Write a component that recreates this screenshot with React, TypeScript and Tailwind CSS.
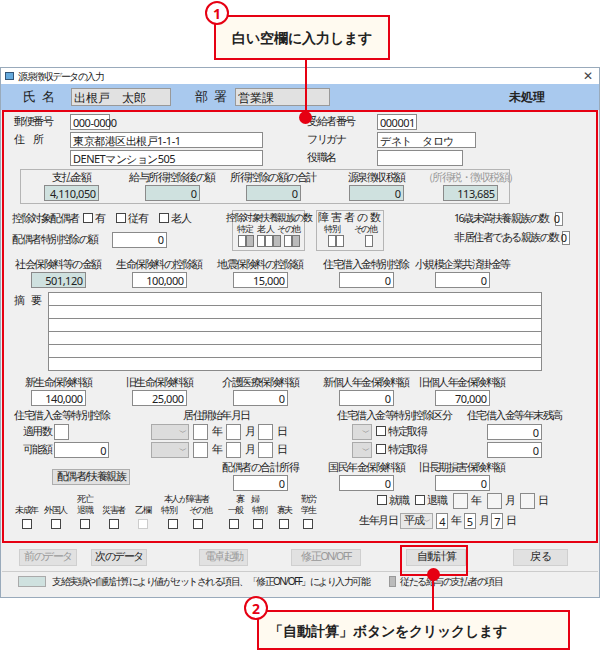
import React from "react";

const F = "font-['Noto_Sans_CJK_JP','Noto_Sans',sans-serif]";

function Box({ w, v = "", c = "bg-white", r = true, h = "h-[16px]" }: { w: number; v?: string; c?: string; r?: boolean; h?: string }) {
  return (
    <div className={`${h} border border-[#8a8a8a] ${c} flex items-center px-[2px] text-[11px] tracking-[-0.5px] leading-none text-[#222] ${r ? "justify-end" : "justify-start"}`} style={{ width: w }}>
      {v}
    </div>
  );
}
function Cb() {
  return <span className="inline-block w-[10px] h-[10px] border border-[#444] bg-white mr-[2px] align-[-1px]" />;
}
function Sel({ w = 40, v = "" }: { w?: number; v?: string }) {
  return (
    <div className={`h-[16px] border border-[#aaa] ${v ? "bg-[#e8e8e8]" : "bg-[#dcdcdc]"} flex items-center justify-between px-[3px]`} style={{ width: w }}>
      <span>{v}</span>
      <span className="text-[8px] text-[#777]">﹀</span>
    </div>
  );
}
function Col({ label, v, c = "bg-white", w = 55 }: { label: string; v: string; c?: string; w?: number }) {
  return (
    <div className="flex flex-col items-center gap-[1px]">
      <div className="leading-[13px]">{label}</div>
      <Box w={w} v={v} c={c} />
    </div>
  );
}
const grid = "grid grid-cols-[100px_102px_100px_112px_80px] ml-[4px]";
const teal = "bg-[#cfe1df]";

export default function App() {
  return (
    <div className={`${F} relative w-[600px] h-[656px] bg-white text-[#222] text-[10.5px] tracking-[-1.5px] whitespace-nowrap overflow-hidden`}>
      <div className="h-[67px]" />
      <div className="border border-[#9ab] bg-[#f0f0f0] h-[531px] flex flex-col">
        <div className="h-[16px] bg-white flex items-center px-[4px] gap-[4px] text-[10px]">
          <span className="w-[9px] h-[8px] border border-[#357] bg-[#6ad]" />
          <span>源泉徴収データの入力</span>
          <span className="ml-auto text-[12px] text-[#444] pr-[4px]">✕</span>
        </div>
        <div className="h-[26px] bg-[#a9c9ee] flex items-center text-[13px] tracking-normal">
          <span className="ml-[22px] w-[48px] tracking-[6px]">氏名</span>
          <div className="w-[100px] h-[18px] bg-[#e1e1e1] border border-[#999] px-[2px] text-[12px]">出根戸　太郎</div>
          <span className="ml-[24px] w-[40px] tracking-[6px]">部署</span>
          <div className="w-[95px] h-[18px] bg-[#e1e1e1] border border-[#999] px-[2px] text-[12px]">営業課</div>
          <span className="ml-auto mr-[54px] font-bold text-[12px]">未処理</span>
        </div>
        <div className="mx-[1px] border-2 border-[#e60012] h-[433px] pt-[2px] flex flex-col">
          <div className="flex">
            <div className="w-[290px] pl-[10px] flex flex-col gap-[2px]">
              <div className="flex items-center"><span className="w-[56px]">郵便番号</span><Box w={40} v="000-0000" r={false} /></div>
              <div className="flex items-center"><span className="w-[56px] tracking-[8px]">住所</span><Box w={193} v="東京都港区出根戸1-1-1" r={false} /></div>
              <div className="flex items-center"><span className="w-[56px]" /><Box w={193} v="DENETマンション505" r={false} /></div>
            </div>
            <div className="pl-[13px] flex flex-col gap-[2px]">
              <div className="flex items-center"><span className="w-[70px]">受給者番号</span><Box w={40} v="000001" r={false} /></div>
              <div className="flex items-center"><span className="w-[70px]">フリガナ</span><Box w={99} v="デネト　タロウ" r={false} /></div>
              <div className="flex items-center"><span className="w-[70px]">役職名</span><Box w={86} /></div>
            </div>
          </div>
          <div className="ml-[16px] mt-[3px] w-[490px] h-[35px] border border-[#b5b5b5] grid grid-cols-[100px_102px_100px_106px_82px] pt-[1px]">
            <Col label="支払金額" v="4,110,050" c={teal} />
            <Col label="給与所得控除後の額" v="0" c={teal} />
            <Col label="所得控除の額の合計" v="0" c={teal} />
            <Col label="源泉徴収税額" v="0" c={teal} />
            <div className="flex flex-col items-center gap-[1px]"><div className="leading-[13px] text-[#999]">（所得税・徴収税額）</div><Box w={55} v="113,685" c={teal} /></div>
          </div>
          <div className="flex mt-[6px] ml-[8px]">
            <div className="w-[220px] flex flex-col gap-[5px] pt-[1px]">
              <div className="flex items-center">控除対象配偶者 <span className="ml-[4px]"><Cb />有</span><span className="ml-[12px]"><Cb />従有</span><span className="ml-[12px]"><Cb />老人</span></div>
              <div className="flex items-center">配偶者特別控除の額<span className="ml-[14px]"><Box w={55} v="0" /></span></div>
            </div>
            <div className="w-[73px] h-[41px] border border-[#b5b5b5] flex flex-col items-center leading-[12px]">
              <div className="text-[10px]">控除対象扶養親族の数</div>
              <div className="flex w-full text-[9px] justify-around px-[2px]"><span>特 定</span><span>老 人</span><span>その他</span></div>
              <div className="flex w-full justify-around px-[3px]">
                <div className="flex"><i className="w-[8px] h-[12px] border border-[#777] bg-white" /><i className="w-[8px] h-[12px] border border-[#777] bg-[#bbb]" /></div>
                <div className="flex"><i className="w-[8px] h-[12px] border border-[#777] bg-white" /><i className="w-[8px] h-[12px] border border-[#777] bg-white" /><i className="w-[8px] h-[12px] border border-[#777] bg-[#bbb]" /></div>
                <div className="flex"><i className="w-[8px] h-[12px] border border-[#777] bg-white" /><i className="w-[8px] h-[12px] border border-[#777] bg-[#bbb]" /></div>
              </div>
            </div>
            <div className="ml-[11px] w-[68px] h-[41px] border border-[#b5b5b5] flex flex-col items-center leading-[12px]">
              <div className="tracking-[2px]">障害者の数</div>
              <div className="flex w-full text-[9px] justify-around"><span>特 別</span><span>その他</span></div>
              <div className="flex w-full justify-around">
                <div className="flex"><i className="w-[8px] h-[12px] border border-[#777] bg-white" /><i className="w-[8px] h-[12px] border border-[#777] bg-white" /></div>
                <i className="w-[8px] h-[12px] border border-[#777] bg-white" />
              </div>
            </div>
            <div className="ml-[70px] flex flex-col gap-[3px] pt-[1px]">
              <div className="flex items-center gap-[6px]">16歳未満扶養親族の数<Box w={8} v="0" h="h-[14px]" /></div>
              <div className="flex items-center gap-[3px]">非居住者である親族の数<Box w={8} v="0" h="h-[14px]" /></div>
            </div>
          </div>
          <div className={`${grid} mt-[7px]`}>
            <Col label="社会保険料等の金額" v="501,120" c={teal} />
            <Col label="生命保険料の控除額" v="100,000" />
            <Col label="地震保険料の控除額" v="15,000" />
            <Col label="住宅借入金特別控除" v="0" />
            <Col label="小規模企業共済掛金等" v="0" />
          </div>
          <div className="flex ml-[10px] mt-[4px]">
            <span className="w-[34px] tracking-[6px] pt-[1px]">摘要</span>
            <div className="flex flex-col">
              {[0, 1, 2, 3, 4, 5].map((i) => (
                <div key={i} className="w-[494px] h-[14px] border border-[#8a8a8a] bg-white -mt-[1px] first:mt-0" />
              ))}
            </div>
          </div>
          <div className={`${grid} mt-[5px]`}>
            <Col label="新生命保険料額" v="140,000" />
            <Col label="旧生命保険料額" v="25,000" />
            <Col label="介護医療保険料額" v="0" />
            <Col label="新個人年金保険料額" v="0" />
            <Col label="旧個人年金保険料額" v="70,000" />
          </div>
          <div className="flex mt-[3px]">
            <div className="w-[130px] pl-[10px] flex flex-col gap-[2px]">
              <div className="leading-[13px]">住宅借入金等特別控除</div>
              <div className="flex items-center"><span className="w-[40px] text-right pr-[3px]">適用数</span><Box w={15} /></div>
              <div className="flex items-center"><span className="w-[40px] text-right pr-[3px]">可能額</span><Box w={55} v="0" /></div>
            </div>
            <div className="w-[200px] pl-[17px] flex flex-col gap-[2px]">
              <div className="pl-[32px] leading-[13px]">居住開始年月日</div>
              {[0, 1].map((i) => (
                <div key={i} className="flex items-center gap-[4px]"><Sel w={38} /><Box w={15} />年<Box w={15} />月<Box w={15} />日</div>
              ))}
            </div>
            <div className="w-[150px] flex flex-col gap-[2px]">
              <div className="pl-[3px] leading-[13px]">住宅借入金等特別控除区分</div>
              {[0, 1].map((i) => (
                <div key={i} className="flex items-center gap-[4px] pl-[18px]"><Sel w={20} /><span><Cb />特定取得</span></div>
              ))}
            </div>
            <div className="flex flex-col items-center gap-[2px] w-[80px] ml-[-10px]">
              <div className="leading-[13px]">住宅借入金等年末残高</div>
              <Box w={55} v="0" />
              <Box w={55} v="0" />
            </div>
          </div>
          <div className={`${grid} mt-[3px]`}>
            <div className="col-span-2 flex items-center pl-[44px]">
              <div className="w-[78px] h-[16px] bg-[#e1e1e1] border border-[#adadad] flex items-center justify-center mt-[2px]">配偶者/扶養親族</div>
            </div>
            <Col label="配偶者の合計所得" v="0" />
            <Col label="国民年金保険料額" v="0" />
            <Col label="旧長期損害保険料額" v="0" />
          </div>
          <div className="flex mt-[2px] items-end">
            <div className="flex items-end text-[9px] tracking-[-1.5px] leading-[11px] pl-[8px]">
              {[["", "未成年"], ["", "外国人"], ["死亡", "退職"], ["", "災害者"], ["", "乙欄"]].map(([a, b], i) => (
                <div key={i} className="flex flex-col items-center w-[29px]">
                  <span>{a}</span><span>{b}</span>
                  <span className={`mt-[4px] w-[10px] h-[10px] border ${i === 4 ? "border-[#ccc]" : "border-[#444]"} bg-white`} />
                </div>
              ))}
              <div className="flex flex-col items-center w-[50px] ml-[4px]">
                <span>本人が障害者</span>
                <div className="flex w-full justify-between"><span>特別</span><span>その他</span></div>
                <div className="flex w-full justify-around mt-[4px]"><Cb /><Cb /></div>
              </div>
              <div className="flex flex-col items-center w-[48px] ml-[12px]">
                <span>寡　婦</span>
                <div className="flex w-full justify-around"><span>一般</span><span>特別</span></div>
                <div className="flex w-full justify-around mt-[4px]"><Cb /><Cb /></div>
              </div>
              <div className="flex flex-col items-center w-[26px]">
                <span>寡夫</span>
                <span className="mt-[4px] w-[10px] h-[10px] border border-[#444] bg-white" />
              </div>
              <div className="flex flex-col items-center w-[22px]">
                <span>勤労</span><span>学生</span>
                <span className="mt-[4px] w-[10px] h-[10px] border border-[#444] bg-white" />
              </div>
            </div>
            <div className="ml-[40px] flex flex-col gap-[4px]">
              <div className="flex items-center gap-[3px] pl-[18px]"><span><Cb />就職</span><span className="ml-[4px]"><Cb />退職</span><span className="ml-[4px]"><Box w={15} c="bg-[#f5f5f5]" /></span>年<span className="ml-[3px]"><Box w={15} c="bg-[#f5f5f5]" /></span>月<span className="ml-[3px]"><Box w={15} c="bg-[#f5f5f5]" /></span>日</div>
              <div className="flex items-center gap-[3px]">生年月日<Sel w={33} v="平成" /><Box w={12} v="4" />年<Box w={12} v="5" />月<Box w={12} v="7" />日</div>
            </div>
          </div>
        </div>
        <div className="flex items-center h-[28px]">
          {([["前のデータ", 18, 58, "text-[#999]"], ["次のデータ", 14, 56, "border-[#0078d7] text-[#222]"], ["電卓起動", 52, 49, "text-[#999]"], ["修正ON/OFF", 43, 70, "text-[#999]"], ["自動計算", 45, 60, "text-[#222] border-[#adadad]"], ["戻 る", 47, 55, "text-[#222] border-[#adadad]"]] as [string, number, number, string][]).map(([t, m, w, c], i) => (
            <div key={i} style={{ marginLeft: m, width: w }} className={`h-[17px] bg-[#e1e1e1] border border-[#cfcfcf] flex items-center justify-center ${c}`}>{t}</div>
          ))}
        </div>
        <div className="mx-[1px] h-[19px] border-t border-[#ccc] flex items-center text-[10px] gap-[4px]">
          <span className="ml-[16px] w-[28px] h-[11px] bg-[#cfe1df] border border-[#aaa]" />
          <span className="ml-[2px]">支給実績や自動計算により値がセットされる項目、「修正ON/OFF」により入力可能</span>
          <span className="ml-[16px] w-[7px] h-[11px] bg-[#bbb] border border-[#999]" />
          <span>従たる給与の支払者の項目</span>
        </div>
      </div>

      <div className="absolute left-[305px] top-[58px] w-[2px] h-[58px] bg-[#e60012]" />
      <div className="absolute left-[299px] top-[111px] w-[13px] h-[13px] rounded-full bg-[#e60012]" />
      <div className="absolute left-[214px] top-[15px] w-[176px] h-[45px] border-2 border-[#e60012] bg-[#fffaf0] flex items-center justify-center text-[14px] tracking-normal font-bold text-[#222]">白い空欄に入力します</div>
      <div className="absolute left-[205px] top-[1px] w-[24px] h-[24px] rounded-full bg-white border-2 border-[#e60012] text-[#e60012] flex items-center justify-center font-bold text-[14px] tracking-normal">1</div>
      <div className="absolute left-[400px] top-[545px] w-[68px] h-[31px] border-2 border-[#e60012]" />
      <div className="absolute left-[432px] top-[575px] w-[2px] h-[36px] bg-[#e60012]" />
      <div className="absolute left-[427px] top-[568px] w-[13px] h-[13px] rounded-full bg-[#e60012]" />
      <div className="absolute left-[257px] top-[610px] w-[313px] h-[40px] border-2 border-[#e60012] bg-[#fffaf0] flex items-center pl-[10px] text-[14px] tracking-normal font-bold">「自動計算」ボタンをクリックします</div>
      <div className="absolute left-[244px] top-[596px] w-[24px] h-[24px] rounded-full bg-white border-2 border-[#e60012] text-[#e60012] flex items-center justify-center font-bold text-[14px] tracking-normal">2</div>
    </div>
  );
}
